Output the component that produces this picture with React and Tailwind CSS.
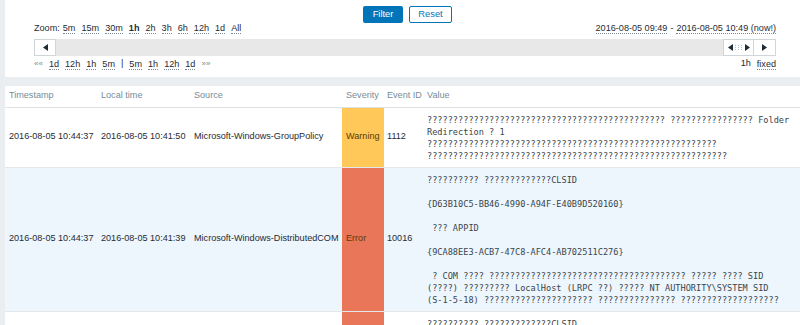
import React from 'react';

const Tri = ({ dir = 'left' }) => (
  <svg width="5" height="7" viewBox="0 0 5 7" className="block">
    {dir === 'left'
      ? <polygon points="5,0 5,7 0,3.5" fill="#1f2c33" />
      : <polygon points="0,0 0,7 5,3.5" fill="#1f2c33" />}
  </svg>
);

const Lnk = ({ children, bold }) => (
  <span className={`border-b border-dotted border-[#7a8a93] leading-[10px] ${bold ? 'font-bold' : ''}`}>{children}</span>
);

const q = (n) => '?'.repeat(n);

const comLines = [
  `${q(10)} ${q(13)}CLSID`,
  '',
  '{D63B10C5-BB46-4990-A94F-E40B9D520160}',
  '',
  ' ??? APPID',
  '',
  '{9CA88EE3-ACB7-47C8-AFC4-AB702511C276}',
  '',
  ` ? COM ???? ${q(38)} ????? ???? SID`,
  '(????) ????????? LocalHost (LRPC ??) ????? NT AUTHORITY\\SYSTEM SID',
  `(S-1-5-18) ${q(21)} ${q(15)} ${q(19)}`,
];

const rows = [
  {
    ts: '2016-08-05 10:44:37',
    local: '2016-08-05 10:41:50',
    source: 'Microsoft-Windows-GroupPolicy',
    sev: 'Warning',
    sevBg: 'bg-[#ffc859]',
    id: '1112',
    rowBg: 'bg-white',
    value: [
      `${q(46)} ${q(16)} Folder`,
      'Redirection ? 1',
      q(56),
      q(58),
    ],
  },
  {
    ts: '2016-08-05 10:44:37',
    local: '2016-08-05 10:41:39',
    source: 'Microsoft-Windows-DistributedCOM',
    sev: 'Error',
    sevBg: 'bg-[#e97659]',
    id: '10016',
    rowBg: 'bg-[#edf5fd]',
    value: comLines,
  },
  {
    ts: '2016-08-05 10:44:37',
    local: '2016-08-05 10:41:39',
    source: 'Microsoft-Windows-DistributedCOM',
    sev: 'Error',
    sevBg: 'bg-[#e97659]',
    id: '10016',
    rowBg: 'bg-white',
    value: comLines,
  },
];

export default function App() {
  return (
    <div className="bg-[#ebeef0] h-[325px] overflow-hidden font-['Liberation_Sans',Arial,sans-serif] text-[9.1px] text-[#1f2c33]">
      {/* filter panel */}
      <div className="ml-[5px] bg-white h-[77px] pt-[6px] pl-[29px] pr-[24px]">
        <div className="flex justify-center gap-[6px] h-[17px] pl-[5px]">
          <button className="w-[40px] h-[17px] rounded-[2px] bg-[#0275b8] text-white text-[9.3px] leading-none">Filter</button>
          <button className="w-[43px] h-[17px] rounded-[2px] border border-[#0275b8] bg-white text-[#0275b8] text-[9.3px] leading-none">Reset</button>
        </div>

        <div className="flex justify-between items-center h-[11px]">
          <div className="flex items-center gap-[6px]">
            <span className="mr-[-3px]">Zoom:</span>
            <Lnk>5m</Lnk><Lnk>15m</Lnk><Lnk>30m</Lnk><Lnk bold>1h</Lnk><Lnk>2h</Lnk>
            <Lnk>3h</Lnk><Lnk>6h</Lnk><Lnk>12h</Lnk><Lnk>1d</Lnk><Lnk>All</Lnk>
          </div>
          <div className="flex items-center">
            <Lnk>2016-08-05 09:49</Lnk>
            <span className="px-[3px]">-</span>
            <Lnk>2016-08-05 10:49 (now!)</Lnk>
          </div>
        </div>

        <div className="mt-[5px] h-[17px] bg-[#e8e8e8] flex justify-between">
          <div className="w-[22px] h-[17px] bg-white border border-[#cfd6da] flex items-center justify-center">
            <Tri dir="left" />
          </div>
          <div className="flex">
            <div className="w-[31px] h-[17px] bg-white border border-[#cfd6da] flex items-center justify-center gap-[2px]">
              <Tri dir="left" />
              <svg width="8" height="5" viewBox="0 0 8 5" className="block">
                <g fill="#b8c0c5">
                  <rect x="0" y="0" width="1" height="1" /><rect x="3" y="0" width="1" height="1" /><rect x="6" y="0" width="1" height="1" />
                  <rect x="0" y="2" width="1" height="1" /><rect x="3" y="2" width="1" height="1" /><rect x="6" y="2" width="1" height="1" />
                  <rect x="0" y="4" width="1" height="1" /><rect x="3" y="4" width="1" height="1" /><rect x="6" y="4" width="1" height="1" />
                </g>
              </svg>
              <Tri dir="right" />
            </div>
            <div className="w-[22px] h-[17px] bg-white border border-l-0 border-[#cfd6da] flex items-center justify-center">
              <Tri dir="right" />
            </div>
          </div>
        </div>

        <div className="mt-[2px] h-[12px] flex justify-between items-center">
          <div className="flex items-center gap-[6px]">
            <span className="text-[#768d99] text-[8px]">««</span>
            <Lnk>1d</Lnk><Lnk>12h</Lnk><Lnk>1h</Lnk><Lnk>5m</Lnk>
            <span>|</span>
            <Lnk>5m</Lnk><Lnk>1h</Lnk><Lnk>12h</Lnk><Lnk>1d</Lnk>
            <span className="text-[#768d99] text-[8px]">»»</span>
          </div>
          <div className="flex items-center gap-[6px]">
            <span>1h</span>
            <Lnk>fixed</Lnk>
          </div>
        </div>
      </div>

      {/* table */}
      <div className="ml-[5px] mt-[9px] bg-white">
        <table className="w-[795px] table-fixed border-collapse">
          <colgroup>
            <col className="w-[92px]" />
            <col className="w-[93px]" />
            <col className="w-[152px]" />
            <col className="w-[42px]" />
            <col className="w-[40px]" />
            <col />
          </colgroup>
          <thead>
            <tr className="h-[21px] border-b border-[#dde2e5] text-[#768d99] text-left">
              <th className="font-normal pl-[4px]">Timestamp</th>
              <th className="font-normal pl-[4px]">Local time</th>
              <th className="font-normal pl-[4px]">Source</th>
              <th className="font-normal pl-[4px]">Severity</th>
              <th className="font-normal pl-[3px] whitespace-nowrap">Event ID</th>
              <th className="font-normal pl-[3px]">Value</th>
            </tr>
          </thead>
          <tbody>
            {rows.map((r, i) => (
              <tr key={i} className={`${r.rowBg} border-b border-[#e4e8eb] align-middle`}>
                <td className="pl-[4px] whitespace-nowrap">{r.ts}</td>
                <td className="pl-[4px] whitespace-nowrap">{r.local}</td>
                <td className="pl-[4px] whitespace-nowrap">{r.source}</td>
                <td className={`pl-[4px] ${r.sevBg} text-[#5b3b08]`}>{r.sev}</td>
                <td className="pl-[3px]">{r.id}</td>
                <td className="pl-[3px] pt-[6px] pb-[5px] align-top">
                  <div className="font-['DejaVu_Sans_Mono',monospace] text-[8.6px] leading-[12px] text-[#3a454b] whitespace-pre">
                    {r.value.map((l, j) => (
                      <div key={j} className="h-[12px]">{l}</div>
                    ))}
                  </div>
                </td>
              </tr>
            ))}
          </tbody>
        </table>
      </div>
    </div>
  );
}
